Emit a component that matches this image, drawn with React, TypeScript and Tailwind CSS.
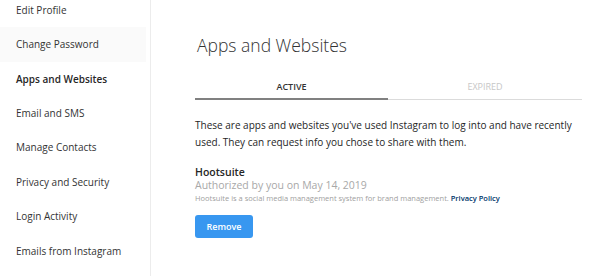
import React from "react";

const items = [
  "Edit Profile",
  "Change Password",
  "Apps and Websites",
  "Email and SMS",
  "Manage Contacts",
  "Privacy and Security",
  "Login Activity",
  "Emails from Instagram",
];

export default function App() {
  return (
    <div
      className="flex h-[276px] w-[600px] overflow-hidden bg-white text-[#262626]"
      style={{ fontFamily: '"Open Sans", "Noto Sans", sans-serif' }}
    >
      <div className="w-[151px] shrink-0 border-r border-[#ececec] -mt-[7px]">
        {items.map((t, i) => (
          <div
            key={t}
            className={`flex h-[34.45px] items-center pl-[16px] text-[10px] ${
              i === 1 ? "mr-[4px] bg-[#fafafa]" : ""
            } ${i === 2 ? "font-semibold text-[#262626]" : "text-[#333]"}`}
          >
            {t}
          </div>
        ))}
      </div>
      <div className="flex-1 pl-[44px] pr-[18px] pt-[33px]">
        <div className="pl-[2px] text-[17.5px] font-light leading-[24px] text-[#333]">
          Apps and Websites
        </div>
        <div className="mt-[20px] flex">
          <div className="flex h-[23px] w-[193px] items-start justify-center border-b-2 border-[#808080] pt-[3px] text-[9px] font-semibold leading-[14px] text-[#333]">
            ACTIVE
          </div>
          <div className="flex h-[23px] flex-1 items-start justify-center border-b border-[#dbdbdb] pt-[3px] text-[9px] leading-[14px] text-[#c7c7c7]">
            EXPIRED
          </div>
        </div>
        <p className="mt-[17px] text-[10px] leading-[17px] text-[#262626]">
          These are apps and websites you've used Instagram to log into and have recently used. They can request
          info you chose to share with them.
        </p>
        <div className="mt-[15px] text-[10.5px] font-semibold leading-[13px] text-[#262626]">Hootsuite</div>
        <div className="text-[10.5px] leading-[13px] text-[#a8a8a8]">Authorized by you on May 14, 2019</div>
        <div className="text-[7.5px] leading-[12px] text-[#a0a0a0]">
          Hootsuite is a social media management system for brand management.{" "}
          <span className="font-semibold text-[#003569]">Privacy Policy</span>
        </div>
        <button className="mt-[11px] h-[23px] w-[58px] rounded-[3px] bg-[#3897f0] text-[9px] font-semibold text-white">
          Remove
        </button>
      </div>
    </div>
  );
}
